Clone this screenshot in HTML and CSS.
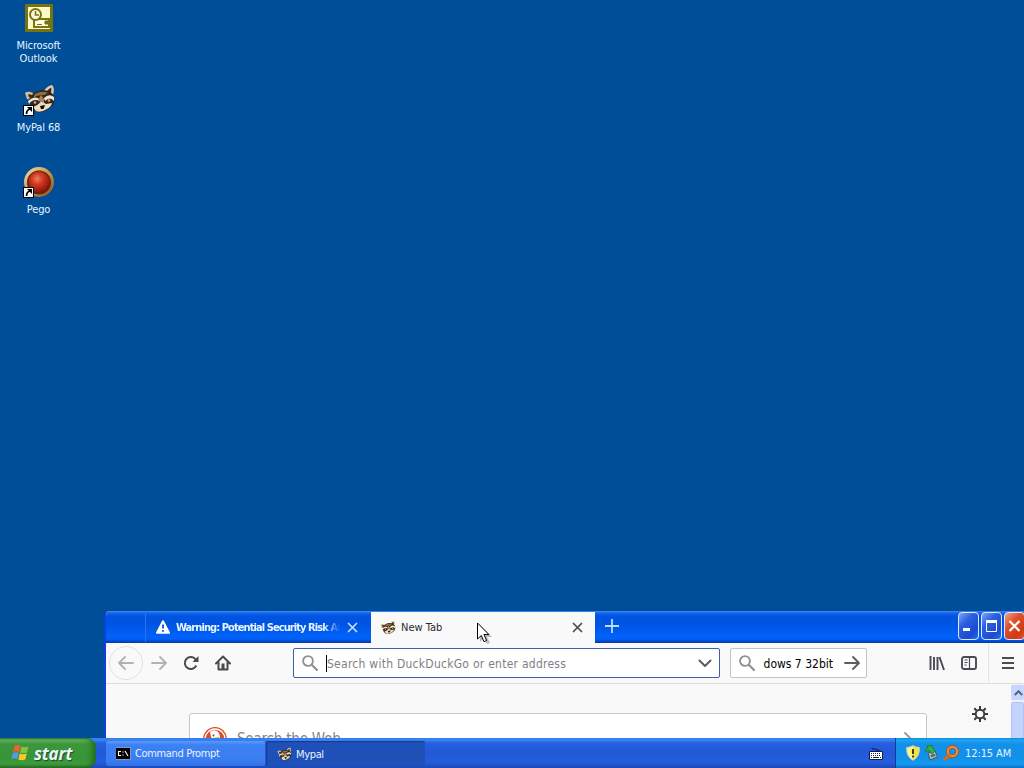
FILE: index.html
```html
<!DOCTYPE html>
<html lang="en">
  <head>
    <meta charset="UTF-8">
    <title>Desktop</title>
    <link rel="stylesheet" href="styles.css">
  </head>
  <body>
    <svg class="sprites" width="0" height="0">
      <defs>
        <radialGradient id="ruby" cx="42%" cy="35%" r="65%">
          <stop offset="0" stop-color="#f08060"/>
          <stop offset=".4" stop-color="#d43a22"/>
          <stop offset="1" stop-color="#8a1508"/>
        </radialGradient>
        <linearGradient id="ring" x1="0" y1="0" x2="1" y2="1">
          <stop offset="0" stop-color="#f0e2b4"/>
          <stop offset=".5" stop-color="#c8954c"/>
          <stop offset="1" stop-color="#8a4c1c"/>
        </linearGradient>
      </defs>
      <symbol id="raccoon" viewBox="0 0 32 32">
        <path d="M1 9 Q5 6 10 10 L8 16 L3 15 Z" fill="#d8bf98"/>
        <path d="M4 10.500 Q7 9.500 9 12 L5 13.500 Z" fill="#3a2a1c"/>
        <path d="M20 7 Q23 2 28 1 Q31 4 29 11 Z" fill="#e6d0a8"/>
        <path d="M23 7 Q25 4 27.500 3.500 L27 10 Z" fill="#3a2a1c"/>
        <path d="M5 15 Q9 7 18 6 Q27 6 30 12 Q32 19 26 24 Q20 29 14 28 Q6 26 5 15 Z" fill="#33261b"/>
        <path d="M11 10 Q18 6 24 9 L20 11 Q13 11 9 14 Z" fill="#8d6e48"/>
        <path d="M4 17 Q9 12 14 14 L16 17 Q9 14 5 20 Z M20 14 Q25 9 30 13 L30 17 Q26 12 21 17 Z" fill="#f4e8d2"/>
        <path d="M17 11 L20 15 L20 20 L16 20 L15 14 Z" fill="#a98258"/>
        <path d="M9 23 Q14 21 17 18 Q20 18 22 20 L28 19 Q27 23 23 25 Q17 29 12 27 Z" fill="#ecdcc0"/>
        <path d="M16 22 L21 21 L19.500 25 L17 25 Z" fill="#120c08"/>
        <circle cx="11" cy="18.500" r="1.300" fill="#c9b08a"/>
        <circle cx="25" cy="16.500" r="1.300" fill="#c9b08a"/>
      </symbol>
      <symbol id="shortcut" viewBox="0 0 11 11">
        <path d="M0 0h11v11H0z" fill="#000"/>
        <path d="M1 1h9v9H1z" fill="#fff"/>
        <path d="M4 2h5v5z" fill="#000"/>
        <path d="M7 4Q3.500 5 3.500 9" fill="none" stroke="#000" stroke-width="1.700"/>
      </symbol>
      <symbol id="magnifier" viewBox="0 0 16 16">
        <circle cx="6" cy="6" r="4.900" fill="none" stroke="currentColor" stroke-width="1.900"/>
        <path d="M9.700 9.700 L15 15" stroke="currentColor" stroke-width="2.200" stroke-linecap="round"/>
      </symbol>
      <symbol id="arrow-right" viewBox="0 0 16 16">
        <path d="M1 8h14M9 2l6 6-6 6" fill="none" stroke="currentColor" stroke-width="1.800" stroke-linecap="round" stroke-linejoin="round"/>
      </symbol>
      <symbol id="cross" viewBox="0 0 11 11">
        <path d="M1.500 1.500l8 8M9.500 1.500l-8 8" stroke="currentColor" stroke-width="1.700" stroke-linecap="round"/>
      </symbol>
    </svg>

    <main class="desktop">
      <div class="shortcuts">
        <div class="shortcut">
          <svg width="32" height="32" viewBox="0 0 32 32">
            <path d="M2 2h28v28H2z" fill="#77740f"/>
            <path d="M5 5h22v22H5z" fill="#fbf9c9"/>
            <path d="M11 17h15v8H11z" fill="#fffde0" stroke="#777411" stroke-width="2"/>
            <path d="M14 22.500h5M22 19h3v3h-3z" stroke="#777411" fill="#777411"/>
            <circle cx="12.500" cy="12.500" r="5.500" fill="#fffde0" stroke="#777411" stroke-width="2"/>
            <path d="M12.500 9v4h3.500" fill="none" stroke="#777411" stroke-width="1.600"/>
          </svg>
          <span>Microsoft<br>Outlook</span>
        </div>
        <div class="shortcut">
          <svg width="32" height="32" viewBox="0 0 32 32">
            <use href="#raccoon" x="1" width="32" height="32"/>
            <use href="#shortcut" x="0" y="21" width="11" height="11"/>
          </svg>
          <span>MyPal 68</span>
        </div>
        <div class="shortcut">
          <svg width="32" height="32" viewBox="0 0 32 32">
            <circle cx="16" cy="16" r="15" fill="url(#ring)"/>
            <circle cx="16" cy="16.500" r="12" fill="#642410"/>
            <circle cx="16" cy="16" r="10.500" fill="url(#ruby)"/>
            <use href="#shortcut" x="0" y="21" width="11" height="11"/>
          </svg>
          <span>Pego</span>
        </div>
      </div>

      <section class="window">
        <header class="titlebar">
          <div class="tab">
            <svg class="tab-icon" width="14" height="14" viewBox="0 0 14 14">
              <path d="M7 1.200 L13 12.800 H1 Z" fill="#fff" stroke="#fff" stroke-width="2" stroke-linejoin="round"/>
              <path d="M7 4.500v4M7 10v1.800" stroke="#0a50dd" stroke-width="1.800"/>
            </svg>
            <span class="tab-title faded">Warning: Potential Security Risk Ah</span>
            <svg class="tab-close" width="11" height="11"><use href="#cross"/></svg>
          </div>
          <div class="tab active">
            <svg class="tab-icon" width="16" height="16"><use href="#raccoon"/></svg>
            <span class="tab-title">New Tab</span>
            <svg class="tab-close" width="11" height="11"><use href="#cross"/></svg>
          </div>
          <svg class="new-tab" width="14" height="14" viewBox="0 0 14 14">
            <path d="M7 0v14M0 7h14" stroke="#b9dcff" stroke-width="1.800"/>
          </svg>
          <div class="window-buttons">
            <span class="win-btn"><svg width="19" height="25" viewBox="0 0 19 25"><path d="M4 16.500h7" stroke="#fff" stroke-width="3"/></svg></span>
            <span class="win-btn"><svg width="19" height="25" viewBox="0 0 19 25"><path d="M4.500 8v10.500h10V8" fill="none" stroke="#fff"/><path d="M4 8.500h11" stroke="#fff" stroke-width="3"/></svg></span>
            <span class="win-btn close"><svg width="19" height="25" viewBox="0 0 19 25"><path d="M4.500 8l10 10M14.500 8l-10 10" stroke="#fff" stroke-width="2.200"/></svg></span>
          </div>
        </header>

        <nav class="toolbar">
          <span class="back"><svg width="16" height="16"><use href="#arrow-right"/></svg></span>
          <svg class="forward" width="16" height="16"><use href="#arrow-right"/></svg>
          <svg class="reload" width="16" height="16" viewBox="0 0 16 16">
            <path d="M13.300 10.500A6 6 0 1 1 12 3.700L14 5.500" fill="none" stroke="#4a4a4f" stroke-width="2"/>
            <path d="M15.500 1v6H9.500z" fill="#4a4a4f"/>
          </svg>
          <svg class="home" width="16" height="16" viewBox="0 0 16 16">
            <path d="M1 8.500L8 1.500l7 7M3.500 7.500V14.500h9V7.500" fill="none" stroke="#4a4a4f" stroke-width="2" stroke-linejoin="round" stroke-linecap="round"/>
            <path d="M6.500 8.500h3V14h-3z" fill="#4a4a4f"/>
          </svg>
          <div class="urlbar">
            <svg class="glass" width="16" height="16"><use href="#magnifier"/></svg>
            <span class="placeholder">Search with DuckDuckGo or enter address</span>
            <svg class="dropdown" width="14" height="9" viewBox="0 0 14 9"><path d="M1.500 1.500L7 7l5.500-5.500" fill="none" stroke="#5c5c61" stroke-width="2" stroke-linecap="round" stroke-linejoin="round"/></svg>
          </div>
          <div class="searchbar">
            <svg class="glass" width="16" height="16"><use href="#magnifier"/></svg>
            <span class="query"><span>dows 7 32bit</span></span>
            <svg class="go" width="16" height="16"><use href="#arrow-right"/></svg>
          </div>
          <svg class="library" width="16" height="16" viewBox="0 0 16 16">
            <path d="M1.500 1v14M5 2v13M8.500 2v13M10.500 2l4.500 13" fill="none" stroke="#4a4a4f" stroke-width="1.900"/>
          </svg>
          <svg class="sidebar" width="16" height="14" viewBox="0 0 16 14">
            <rect x="1" y="1" width="14" height="12" rx="2" fill="none" stroke="#4a4a4f" stroke-width="1.900"/>
            <path d="M8.500 1v12M3.500 4h3M3.500 6.500h3M3.500 9h2" stroke="#4a4a4f" stroke-width="1.200"/>
          </svg>
          <span class="menu">
            <svg width="12" height="12" viewBox="0 0 12 12"><path d="M0 1h12M0 6h12M0 11h12" stroke="#4a4a4f" stroke-width="1.900"/></svg>
          </span>
        </nav>

        <div class="page">
          <div class="web-search">
            <svg class="duck" width="26" height="26" viewBox="0 0 26 26">
              <circle cx="13" cy="13" r="12" fill="#de4a2b"/>
              <circle cx="13" cy="13" r="10" fill="none" stroke="#fff" stroke-width="1.300"/>
              <path d="M8 6q3-3 7-1 3 2 3 7l1 10h-6L9 11z" fill="#fff"/>
              <circle cx="11.500" cy="9.500" r="1" fill="#555"/>
              <path d="M11 12l6-1v2z" fill="#f5b400"/>
            </svg>
            <span>Search the Web</span>
            <svg class="web-go" width="16" height="16"><use href="#arrow-right"/></svg>
          </div>
          <svg class="gear" width="16" height="16" viewBox="0 0 16 16">
            <circle cx="8" cy="8" r="4.300" fill="none" stroke="#38383d" stroke-width="1.900"/>
            <path d="M8 0v3M8 13v3M0 8h3M13 8h3M2.300 2.300l2.200 2.200M11.500 11.500l2.200 2.200M2.300 13.700l2.200-2.200M11.500 4.500l2.200-2.200" stroke="#38383d" stroke-width="2"/>
          </svg>
          <div class="scrollbar">
            <span class="scroll-up"><svg width="9" height="6" viewBox="0 0 9 6"><path d="M.8 5l3.700-3.700L8.200 5" fill="none" stroke="#4d6185" stroke-width="2"/></svg></span>
            <span class="thumb"></span>
          </div>
        </div>
      </section>

      <svg class="cursor" width="16" height="24" viewBox="0 0 16 24">
        <path d="M3 3v17l4-4 3 6 3-1-3-6h5z" fill="#000" opacity=".25"/>
        <path d="M.5 1v16l3.800-3.500 2.700 6.200 2.600-1.200-2.700-6h5z" fill="#fff" stroke="#000"/>
      </svg>
    </main>

    <footer class="taskbar">
      <div class="start">
        <svg width="19" height="18" viewBox="0 0 19 18">
          <path d="M3.500 2q3-2 6 0L8 8Q5 6.500 2 8z" fill="#f0602c"/>
          <path d="M10.500 2.500q3 1.500 7 0L16 8.500q-4 1.500-7 0z" fill="#84c440"/>
          <path d="M1.800 9q3-1.500 6 0L6.300 15Q3.500 13.500.3 15z" fill="#5d94f0"/>
          <path d="M8.800 9.500q3 1.500 7 0L14.300 15.500q-4 1.500-7 0z" fill="#fbc92c"/>
        </svg>
        <span>start</span>
      </div>
      <div class="tasks">
        <div class="task">
          <svg width="15" height="13" viewBox="0 0 15 13">
            <path d="M0 0h15v13H0z" fill="#7f97c4"/>
            <path d="M0 1h14v11H0z" fill="#000"/>
            <path d="M5 4.500H2.500v4H5M7 4.500v1M7 7.500v1M9 4l3 5" fill="none" stroke="#fff" stroke-width="1.100"/>
          </svg>
          <span>Command Prompt</span>
        </div>
        <div class="task pressed">
          <svg width="15" height="15"><use href="#raccoon"/></svg>
          <span>Mypal</span>
        </div>
      </div>
      <svg class="keyboard" width="14" height="12" viewBox="0 0 14 12">
        <path d="M3 0v1h4v1h3v1" fill="none" stroke="#0a1c60"/>
        <path d="M.5 3.500h13v8H.5z" fill="#fff" stroke="#101c40"/>
        <path d="M2 5.500h10M2 7.500h10" stroke="#15204a" stroke-dasharray="1 1"/>
        <path d="M2 9.500h1M4 9.500h6M11 9.500h1" stroke="#15204a"/>
      </svg>
      <div class="tray">
        <svg width="14" height="16" viewBox="0 0 14 16">
          <path d="M7 .7q3 1.800 6.300 1.800Q14 11.500 7 15.300 0 11.500.7 2.500 4 2.500 7 .7z" fill="#f6e335" stroke="#cbd3da"/>
          <path d="M7 1.500v13.300Q1 11 1.500 3.200 4.500 3 7 1.500z" fill="#fff48a"/>
          <path d="M7 4v5M7 10.500v2" stroke="#2b2a10" stroke-width="1.800"/>
        </svg>
        <svg width="15" height="16" viewBox="0 0 15 16">
          <path d="M4 8l7-2 2.500 6-7.500 3z" fill="#a9b8c0" stroke="#3c5660"/>
          <path d="M6.500 10l4-1 1 2-4 1z" fill="#44606e"/>
          <path d="M3 1l5-.5V2l3 4-3 3-3-4-3 2-1-2 3-2z" fill="#35b53b" stroke="#17752a" stroke-width=".8"/>
        </svg>
        <svg width="17" height="16" viewBox="0 0 17 16">
          <circle cx="9.500" cy="6.500" r="4.700" fill="none" stroke="#a84c12" stroke-width="3.400"/>
          <circle cx="9.500" cy="6.500" r="4.700" fill="none" stroke="#f28a2e" stroke-width="2.200"/>
          <path d="M6 10.500L2 14" stroke="#d96b1c" stroke-width="3.200" stroke-linecap="round"/>
        </svg>
        <span>12:15 AM</span>
      </div>
    </footer>
  </body>
</html>
```
FILE: styles.css
```css
* {
  box-sizing: border-box;
}

body {
  margin: 0;
  width: 1024px;
  height: 768px;
  display: flex;
  flex-direction: column;
  overflow: hidden;
  font-family: "DejaVu Sans Condensed", "DejaVu Sans", sans-serif;
  font-size: 11px;
  white-space: nowrap;
}

svg {
  display: block;
  flex: none;
}

.sprites {
  position: absolute;
}

.desktop {
  position: relative;
  flex: 1;
  overflow: hidden;
  background: #004e98;
}

.shortcuts {
  width: 77px;
}

.shortcut {
  height: 82px;
  padding-top: 2px;
  display: flex;
  flex-direction: column;
  align-items: center;
  gap: 5px;
  color: #e4f6ff;
  letter-spacing: -0.1px;
  line-height: 13px;
  text-align: center;
}

/* browser window */
.window {
  position: absolute;
  left: 104px;
  top: 611px;
  width: 920px;
  height: 160px;
  border-left: 2px solid #0a3fe0;
  border-top-left-radius: 5px;
  overflow: hidden;
  background: #f9f9fa;
}

.titlebar {
  height: 32px;
  padding: 1px 0 0 39px;
  display: flex;
  background: linear-gradient(#3c8cf5 0, #1266ee 2px, #0054e0 5px, #0054e3 14px, #0062fa 25px, #0260f8 28px, #0342bc 31px, #02389f 32px);
}

.tab {
  width: 226px;
  height: 30px;
  padding: 0 13px 0 10px;
  display: flex;
  align-items: center;
  color: #e8f4ff;
  border-left: 1px solid #2c74ee;
}

.tab.active {
  width: 224px;
  height: 31px;
  padding: 0 12px 0 8px;
  border-left: 1px solid #f9f9fa;
  background: #f9f9fa;
  color: #2a2a2e;
}

.tab-title {
  flex: 1;
  margin-left: 5px;
}

.tab-title.faded {
  width: 164px;
  flex: none;
  margin: 0 auto 0 6px;
  font-weight: bold;
  letter-spacing: -0.92px;
  -webkit-mask-image: linear-gradient(90deg, #000 90%, transparent);
  mask-image: linear-gradient(90deg, #000 90%, transparent);
}

.tab-close {
  color: #c4e0ff;
}

.active .tab-close {
  color: #4a4a4f;
}

.new-tab {
  margin: 7px 0 0 10px;
}

.window-buttons {
  margin-left: auto;
  display: flex;
  gap: 2px;
  margin-right: -1px;
}

.win-btn {
  width: 21px;
  height: 28px;
  border: 1px solid #dce8ff;
  border-radius: 4px;
  background: linear-gradient(135deg, #7fa4f5, #2c5fe0 35%, #1b4bd0 75%, #2f6cf0);
}

.win-btn.close {
  background: linear-gradient(135deg, #f0a58c, #e05330 35%, #cf3a14 75%, #e5582e);
}

.toolbar {
  height: 41px;
  display: flex;
  align-items: center;
  border-bottom: 1px solid #dddde0;
}

.back {
  width: 34px;
  height: 34px;
  margin-left: 3px;
  padding: 8px;
  border: 1px solid #e0e0e2;
  border-radius: 50%;
  color: #b2b2b5;
  transform: scaleX(-1);
}

.forward {
  margin-left: 8px;
  color: #b2b2b5;
}

.reload,
.home {
  margin-left: 16px;
}

.urlbar,
.searchbar {
  height: 30px;
  display: flex;
  align-items: center;
  background: #fff;
  border: 1px solid #c4c4c8;
  border-radius: 2px;
  font-size: 12px;
}

.urlbar {
  width: 427px;
  margin-left: 62px;
  padding: 0 7px 0 8px;
  border-color: #3d5ea8;
}

.glass {
  color: #919195;
}

.placeholder {
  flex: 1;
  margin-left: 8px;
  padding-top: 1px;
  line-height: 16px;
  letter-spacing: 0.26px;
  border-left: 1px solid #000;
  color: #808085;
}

.searchbar {
  width: 137px;
  margin-left: 10px;
  padding: 0 6px 0 8px;
}

/* the query is scrolled to its end */
.query {
  width: 71px;
  margin-left: 7px;
  padding-top: 1px;
  display: flex;
  justify-content: flex-end;
  overflow: hidden;
}

.go {
  margin-left: auto;
  color: #5c5c61;
}

.library {
  margin-left: 62px;
}

.sidebar {
  margin-left: 16px;
}

.menu {
  height: 40px;
  margin-left: 11px;
  padding: 14px 0 0 13px;
  border-left: 1px solid #e4e4e6;
}

.page {
  height: 87px;
  display: flex;
}

.web-search {
  width: 738px;
  height: 52px;
  margin: 29px 0 0 83px;
  padding: 0 14px 0 12px;
  display: flex;
  align-items: center;
  gap: 9px;
  background: #fff;
  border: 1px solid #c6c6c8;
  border-radius: 3px;
  font-size: 15px;
  letter-spacing: -0.2px;
  color: #85858a;
}

.web-go {
  margin-left: auto;
  color: #96969a;
}

.gear {
  margin: 22px 0 0 45px;
}

.scrollbar {
  width: 13px;
  margin-left: auto;
  background: #eef1fb;
}

.scroll-up {
  height: 15px;
  margin-top: 1px;
  padding: 5px 0 0 3px;
  display: block;
  background: #c7d6fc;
  border-radius: 2px;
}

.thumb {
  height: 80px;
  margin-top: 2px;
  display: block;
  background: #c3d3fc;
  border: 1px solid #b0c4f4;
  border-radius: 2px;
}

.cursor {
  position: absolute;
  left: 477px;
  top: 622px;
}

/* taskbar */
.taskbar {
  height: 30px;
  display: flex;
  background: linear-gradient(#2f7df0 0, #3b83f3 2px, #2560dd 5px, #2258d8 14px, #245edc 24px, #1c48b8 30px);
  color: #e8f4ff;
}

.start {
  width: 96px;
  padding: 0 0 0 11px;
  display: flex;
  align-items: center;
  gap: 4px;
  border-radius: 0 9px 9px 0;
  background: linear-gradient(#2f7a30 0, #63b464 2px, #3c973c 6px, #379437 20px, #3d9d3c 26px, #256b26 30px);
  box-shadow: inset -5px 0 6px -2px #1e641e;
  font-family: "Open Sans", sans-serif;
  font-size: 17px;
  font-weight: bold;
  font-style: italic;
  letter-spacing: -0.2px;
  text-shadow: 1px 1px 1px #1d4a1d;
}

.tasks {
  padding: 3px 0 2px 10px;
  display: flex;
  gap: 1px;
}

.task {
  width: 159px;
  padding-left: 10px;
  display: flex;
  align-items: center;
  gap: 4px;
  border-radius: 2px;
  background: linear-gradient(#5a9bfa, #3c81f3 4px, #3a7df0 20px, #3170e5);
  letter-spacing: -0.35px;
}

.task.pressed {
  padding: 1px 0 0 11px;
  background: #1e50b7;
  box-shadow: inset 1px 1px 1px #143a8c;
}

.keyboard {
  margin: 10px 12px 0 auto;
}

.tray {
  width: 129px;
  padding-left: 10px;
  display: flex;
  align-items: center;
  gap: 4px;
  border-left: 1px solid #0a3c9c;
  background: linear-gradient(#0d87e2 0, #1fa5f3 2px, #1490e9 6px, #1290e8 20px, #149bf2 26px, #0f6dc6 30px);
}

.tray span {
  margin-left: 1px;
  letter-spacing: -0.1px;
}
```
